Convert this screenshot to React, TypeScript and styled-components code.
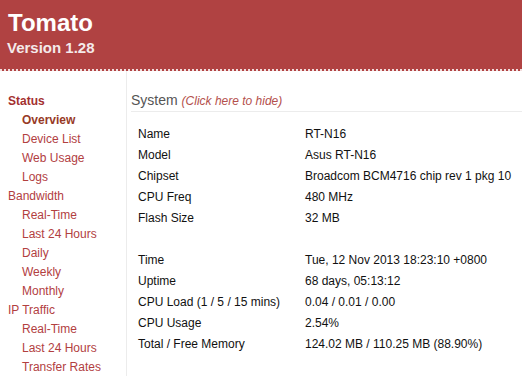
import React from "react";
import styled, { createGlobalStyle } from "styled-components";

const GlobalStyle = createGlobalStyle`
  html, body {
    margin: 0;
    padding: 0;
    background: #fff;
    font-family: "Liberation Sans", Arial, sans-serif;
    font-size: 12px;
  }
`;

const Page = styled.div`
  height: 100vh;
  overflow: hidden;
`;

const Header = styled.div`
  background-color: #b04242;
  color: #fff;
  height: 69px;
  padding-left: 8px;
  border-bottom: 2px dotted #f3dede;
  box-sizing: content-box;
`;

const Title = styled.div`
  font-size: 24px;
  font-weight: bold;
  line-height: 28px;
  padding-top: 9px;
`;

const Version = styled.div`
  font-size: 15px;
  font-weight: bold;
  line-height: 18px;
  margin-top: 2px;
  margin-left: -1px;
  color: #f4eaea;
`;

const Main = styled.div`
  display: flex;
`;

const Sidebar = styled.div`
  width: 126px;
  flex-shrink: 0;
  border-right: 1px solid #ececec;
  padding-top: 21px;
`;

const NavItem = styled.div<{ $sub?: boolean; $active?: boolean; $bold?: boolean }>`
  line-height: 19px;
  font-size: 12px;
  padding-left: ${(p) => (p.$sub ? "22px" : "8px")};
  color: ${(p) => (p.$active ? "#973a26" : p.$bold ? "#a3302f" : "#b2403f")};
  font-weight: ${(p) => (p.$active || p.$bold ? "bold" : "normal")};
  cursor: pointer;
`;

const Content = styled.div`
  flex: 1;
  padding: 20px 0 0 4px;
`;

const SectionHead = styled.div`
  font-size: 14px;
  line-height: 18px;
  color: #555;
  border-bottom: 1px solid #ececec;
  padding-bottom: 1px;
`;

const HideLink = styled.span`
  font-size: 12px;
  font-style: italic;
  color: #b4504c;
  cursor: pointer;
`;

const InfoTable = styled.div`
  display: grid;
  grid-template-columns: 167px 1fr;
  grid-auto-rows: 21px;
  align-items: center;
  margin: 11px 0 0 7px;
  color: #111;
  font-size: 12px;
`;

const Spacer = styled.div`
  grid-column: 1 / span 2;
`;

type Row = [string, string] | null;

const rows: Row[] = [
  ["Name", "RT-N16"],
  ["Model", "Asus RT-N16"],
  ["Chipset", "Broadcom BCM4716 chip rev 1 pkg 10"],
  ["CPU Freq", "480 MHz"],
  ["Flash Size", "32 MB"],
  null,
  ["Time", "Tue, 12 Nov 2013 18:23:10 +0800"],
  ["Uptime", "68 days, 05:13:12"],
  ["CPU Load (1 / 5 / 15 mins)", "0.04 / 0.01 / 0.00"],
  ["CPU Usage", "2.54%"],
  ["Total / Free Memory", "124.02 MB / 110.25 MB (88.90%)"],
];

const nav = [
  { label: "Status", bold: true },
  { label: "Overview", sub: true, active: true },
  { label: "Device List", sub: true },
  { label: "Web Usage", sub: true },
  { label: "Logs", sub: true },
  { label: "Bandwidth" },
  { label: "Real-Time", sub: true },
  { label: "Last 24 Hours", sub: true },
  { label: "Daily", sub: true },
  { label: "Weekly", sub: true },
  { label: "Monthly", sub: true },
  { label: "IP Traffic" },
  { label: "Real-Time", sub: true },
  { label: "Last 24 Hours", sub: true },
  { label: "Transfer Rates", sub: true },
];

export default function App() {
  return (
    <Page>
      <GlobalStyle />
      <Header>
        <Title>Tomato</Title>
        <Version>Version 1.28</Version>
      </Header>
      <Main>
        <Sidebar>
          {nav.map((n, i) => (
            <NavItem key={i} $sub={n.sub} $active={n.active} $bold={n.bold}>
              {n.label}
            </NavItem>
          ))}
        </Sidebar>
        <Content>
          <SectionHead>
            System <HideLink>(Click here to hide)</HideLink>
          </SectionHead>
          <InfoTable>
            {rows.map((r, i) =>
              r ? (
                <React.Fragment key={i}>
                  <div>{r[0]}</div>
                  <div>{r[1]}</div>
                </React.Fragment>
              ) : (
                <Spacer key={i} />
              )
            )}
          </InfoTable>
        </Content>
      </Main>
    </Page>
  );
}
